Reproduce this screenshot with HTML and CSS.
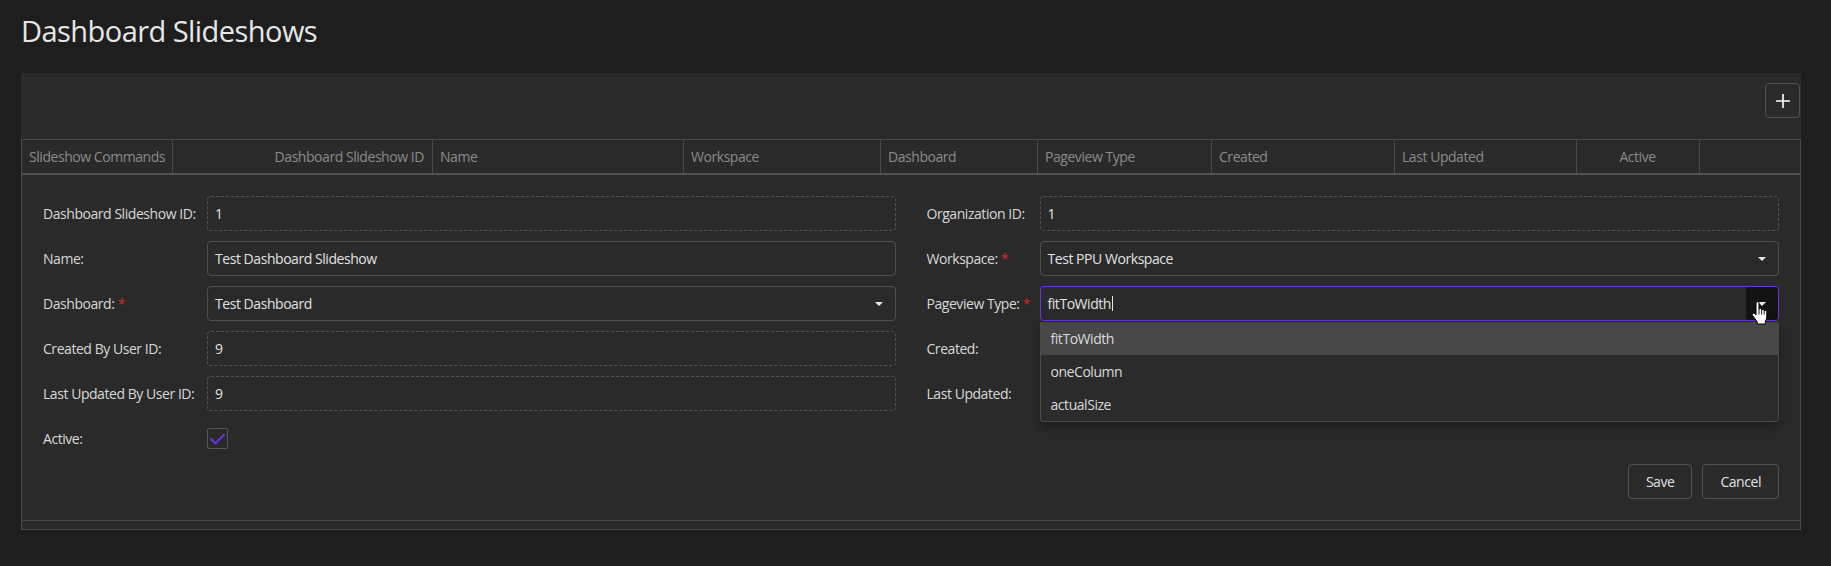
FILE: index.html
```html
<!DOCTYPE html>
<html lang="en">
<head>
<meta charset="utf-8">
<title>Dashboard Slideshows</title>
<link rel="stylesheet" href="styles.css">
</head>
<body>
<div class="page">
  <h1 class="page-title">Dashboard Slideshows</h1>
  <section class="grid-panel">
    <div class="toolbar">
      <button class="icon-btn" type="button" aria-label="Add">
        <svg width="16" height="16" viewBox="0 0 16 16"><path d="M8 1v14M1 8h14" stroke="#ffffff" stroke-width="1.6" fill="none"/></svg>
      </button>
    </div>
    <div class="table">
      <div class="thead">
        <div class="th">Slideshow Commands</div>
        <div class="th th-right">Dashboard Slideshow ID</div>
        <div class="th">Name</div>
        <div class="th">Workspace</div>
        <div class="th">Dashboard</div>
        <div class="th">Pageview Type</div>
        <div class="th">Created</div>
        <div class="th">Last Updated</div>
        <div class="th th-center">Active</div>
        <div class="th th-last"></div>
      </div>
      <div class="edit-form">
        <div class="form-cols">
          <div class="form-col col-left">
            <div class="lbl">Dashboard Slideshow ID:</div>
            <div class="field readonly">1</div>

            <div class="lbl">Name:</div>
            <div class="field">Test Dashboard Slideshow</div>

            <div class="lbl">Dashboard: <span class="req">*</span></div>
            <div class="field select"><span>Test Dashboard</span><svg class="arrow" width="8" height="4" viewBox="0 0 8 4"><path d="M0 0h8L4 4z" fill="#e8e8e8"/></svg></div>

            <div class="lbl">Created By User ID:</div>
            <div class="field readonly">9</div>

            <div class="lbl">Last Updated By User ID:</div>
            <div class="field readonly">9</div>

            <div class="lbl">Active:</div>
            <div class="check-cell">
              <span class="checkbox"><svg width="19" height="19" viewBox="0 0 19 19"><path d="M2.5 9.5l5 4.8 9-9" stroke="#6c2fe0" stroke-width="2" fill="none"/></svg></span>
            </div>
          </div>

          <div class="form-col col-right">
            <div class="lbl">Organization ID:</div>
            <div class="field readonly">1</div>

            <div class="lbl">Workspace: <span class="req">*</span></div>
            <div class="field select"><span>Test PPU Workspace</span><svg class="arrow" width="8" height="4" viewBox="0 0 8 4"><path d="M0 0h8L4 4z" fill="#e8e8e8"/></svg></div>

            <div class="lbl">Pageview Type: <span class="req">*</span></div>
            <div class="field select focused">
              <span class="value">fitToWidth<span class="caret"></span></span>
              <span class="drop-btn">
                <svg class="arrow" width="8" height="4" viewBox="0 0 8 4"><path d="M0 0h8L4 4z" fill="#e8e8e8"/></svg>
                <svg class="hand" width="18" height="24" viewBox="0 0 18 24"><path d="M5 2.2Q5 0.6 6.5 0.6Q8 0.6 8 2.2V8.2Q8 7.3 9.3 7.3Q10.6 7.3 10.6 8.6V9.1Q10.6 8.3 11.9 8.3Q13.2 8.3 13.2 9.6V10.1Q13.2 9.4 14.5 9.4Q15.8 9.4 15.8 10.7V16Q15.8 18.2 14.4 20.2V23H6.2V20.8L1.6 14.6Q0.6 13 1.9 12.2Q3.1 11.6 4.1 12.8L5 13.9Z" fill="#ffffff" stroke="#000000" stroke-width="1" stroke-linejoin="round"/><path d="M8 8.2V13.5M10.6 9.1V13.5M13.2 10.1V13.5" stroke="#000000" stroke-width="0.9" fill="none"/></svg>
              </span>
              <div class="popup">
                <div class="opt active">fitToWidth</div>
                <div class="opt">oneColumn</div>
                <div class="opt">actualSize</div>
              </div>
            </div>

            <div class="lbl">Created:</div>
            <div class="field readonly"></div>

            <div class="lbl">Last Updated:</div>
            <div class="field readonly"></div>
          </div>
        </div>
        <div class="actions">
          <button class="btn" type="button">Save</button>
          <button class="btn" type="button">Cancel</button>
        </div>
      </div>
      <div class="tfoot"></div>
    </div>
  </section>
</div>
</body>
</html>
```

FILE: styles.css
```css
* {
  box-sizing: border-box;
}

html,
body {
  margin: 0;
  padding: 0;
  background: #1e1e1e;
}

body {
  font-family: "Open Sans", "Noto Sans", "DejaVu Sans", sans-serif;
  font-size: 14px;
  letter-spacing: -0.45px;
  color: #d8d8d8;
}

.page {
  padding: 0 30px 0 21px;
}

.page-title {
  margin: 13px 0 25px 0;
  font-size: 29px;
  line-height: 35px;
  font-weight: 400;
  letter-spacing: -0.55px;
  color: #e6e6e6;
}

.grid-panel {
  background: #2a2a2a;
}

.toolbar {
  height: 66px;
  padding: 10px 1px 0 0;
  display: flex;
  justify-content: flex-end;
  align-items: flex-start;
}

.icon-btn {
  width: 35px;
  height: 35px;
  padding: 0;
  border: 1px solid #515151;
  border-radius: 4px;
  background: #2a2a2a;
  display: flex;
  align-items: center;
  justify-content: center;
}

.table {
  border: 1px solid #4a4a4a;
}

.thead {
  display: grid;
  grid-template-columns: 151px 260px 251px 197px 157px 174px 183px 182px 123px 1fr;
  border-bottom: 2px solid #515151;
}

.th {
  height: 33px;
  line-height: 33px;
  padding: 0 8px 0 7px;
  color: #8a8a8a;
  border-right: 1px solid #4a4a4a;
  white-space: nowrap;
  overflow: hidden;
}

.th-right {
  text-align: right;
}

.th-center {
  text-align: center;
}

.th-last {
  border-right: none;
}

.edit-form {
  padding: 21px 21px 21px;
  border-bottom: 1px solid #4a4a4a;
}

.form-cols {
  display: grid;
  grid-template-columns: 1fr 1fr;
  column-gap: 31px;
}

.form-col {
  display: grid;
  grid-auto-rows: 35px;
  row-gap: 10px;
  align-content: start;
}

.col-left {
  grid-template-columns: 164px 1fr;
}

.col-right {
  grid-template-columns: 113px 1fr;
}

.lbl {
  align-self: center;
  line-height: 19px;
  white-space: nowrap;
  color: #d8d8d8;
}

.req {
  color: #d0282e;
}

.field {
  height: 35px;
  border: 1px solid #4f4f4f;
  border-radius: 4px;
  padding: 0 7px;
  line-height: 33px;
  color: #e2e2e2;
  white-space: nowrap;
}

.field.readonly {
  border-style: dashed;
  border-color: #525252;
}

.field.select {
  display: flex;
  align-items: center;
  justify-content: space-between;
  padding-right: 12px;
}

.field.focused {
  position: relative;
  border-color: #7030e6;
  padding-right: 0;
}

.arrow {
  display: block;
}

.value {
  display: flex;
  align-items: center;
}

.caret {
  display: inline-block;
  width: 1px;
  height: 15px;
  margin-left: 1px;
  background: #e6e6e6;
}

.drop-btn {
  position: relative;
  width: 32px;
  height: 100%;
  border-radius: 3px;
  background: #131313;
  display: flex;
  align-items: center;
  justify-content: center;
}

.hand {
  position: absolute;
  left: 5px;
  top: 14px;
  z-index: 10;
}

.popup {
  position: absolute;
  left: -1px;
  right: -1px;
  top: calc(100% + 2px);
  background: #2b2b2b;
  border: 1px solid #4a4a4a;
  border-top: none;
  border-radius: 0 0 4px 4px;
  box-shadow: 0 5px 12px rgba(0, 0, 0, 0.35);
  z-index: 5;
}

.opt {
  height: 33px;
  line-height: 33px;
  padding: 0 10px;
  color: #dadada;
}

.opt.active {
  background: #474747;
}

.check-cell {
  display: flex;
  align-items: center;
}

.checkbox {
  width: 21px;
  height: 21px;
  border: 1px solid #575757;
  border-radius: 2px;
  display: flex;
  align-items: center;
  justify-content: center;
}

.actions {
  display: flex;
  justify-content: flex-end;
  gap: 10px;
  margin-top: 8px;
}

.btn {
  height: 35px;
  padding: 0 17px;
  border: 1px solid #525252;
  border-radius: 4px;
  background: transparent;
  color: #e2e2e2;
  font-family: inherit;
  font-size: 14px;
  letter-spacing: -0.45px;
}

.tfoot {
  height: 8px;
}
```
